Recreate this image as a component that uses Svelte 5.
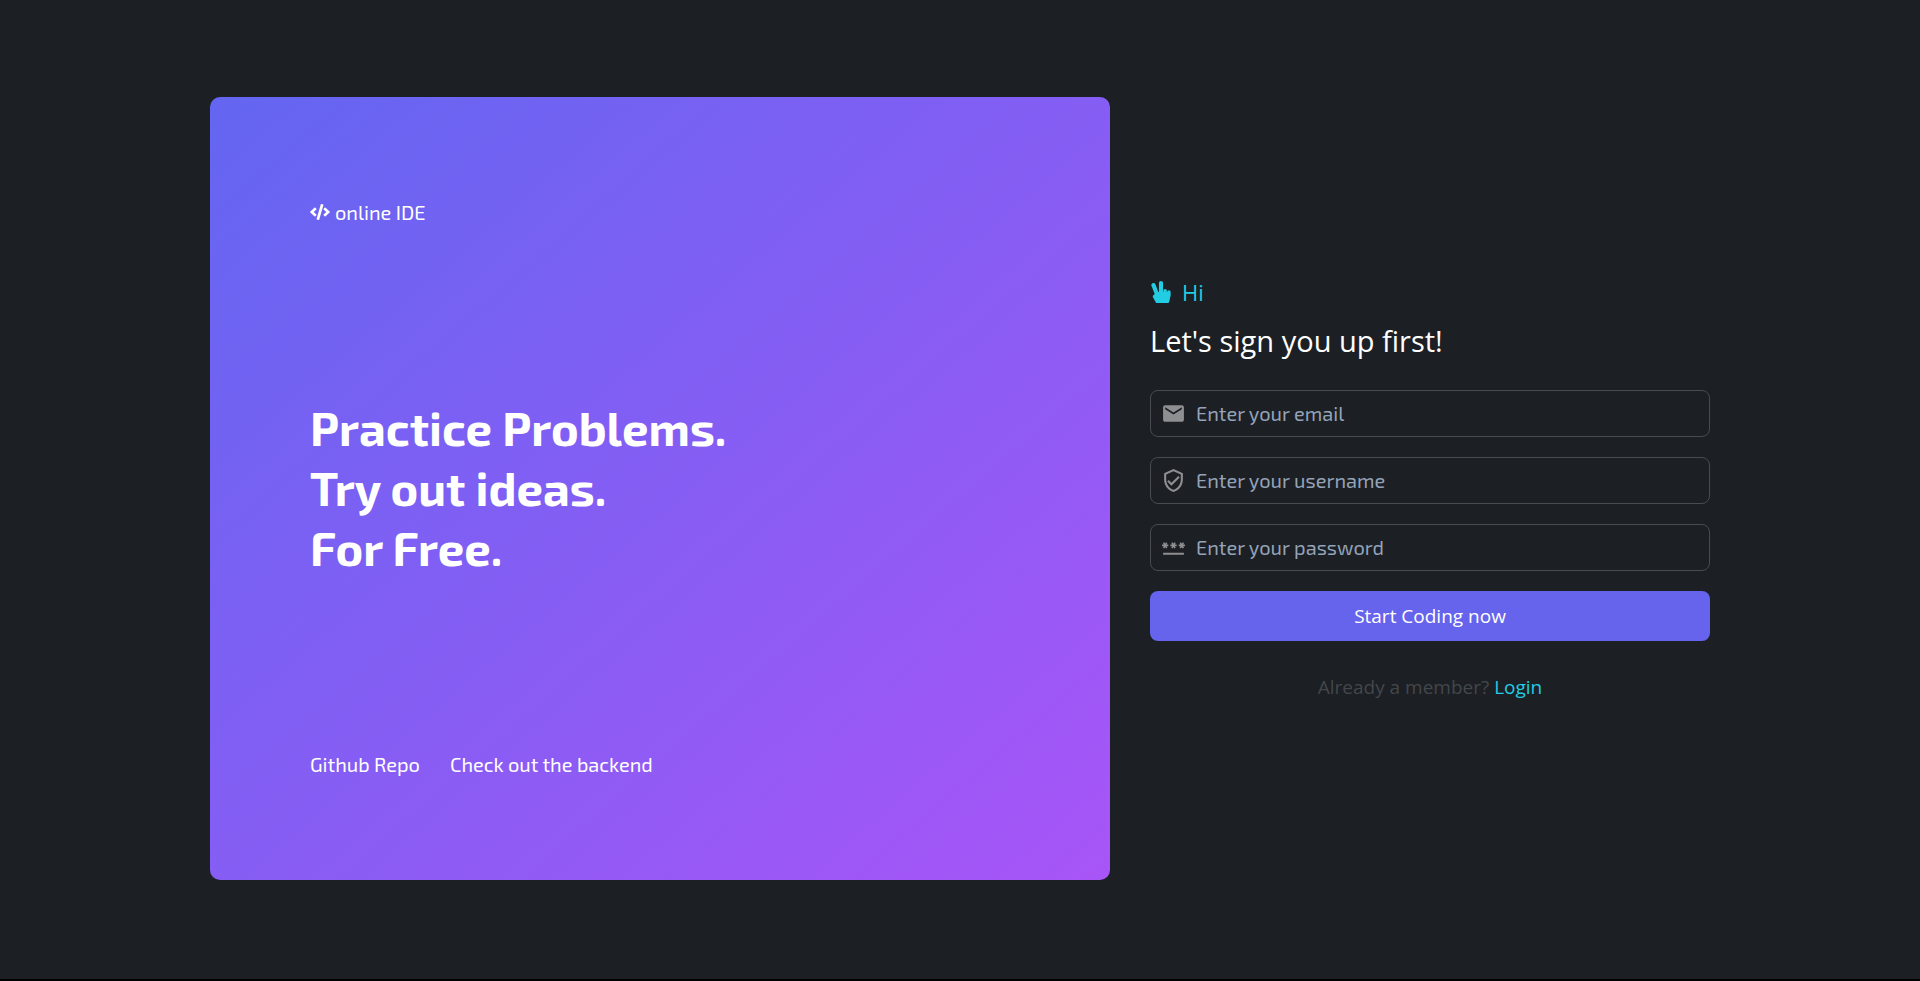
<script>
  const slogans = ['Practice Problems.', 'Try out ideas.', 'For Free.'];

  const icons = {
    email:
      'M20 4H4c-1.1 0-1.99.9-1.99 2L2 18c0 1.1.9 2 2 2h16c1.1 0 2-.9 2-2V6c0-1.1-.9-2-2-2zm0 4l-8 5-8-5V6l8 5 8-5v2z',
    shield:
      'M12 1L3 5v6c0 5.55 3.84 10.74 9 12 5.16-1.26 9-6.45 9-12V5l-9-4zm7 10c0 4.52-2.98 8.69-7 9.93-4.02-1.24-7-5.41-7-9.93V6.3l7-3.11 7 3.11V11zm-11.59.59L6 13l4 4 8-8-1.41-1.42L10 14.17z',
    password:
      'M2 17h20v2H2v-2zm1.15-4.05L4 11.47l.85 1.48 1.3-.75-.85-1.48H7v-1.5H5.3l.85-1.47L4.85 7 4 8.47 3.15 7l-1.3.75.85 1.47H1v1.5h1.7l-.85 1.48 1.3.75zm6.7-.75l1.3.75.85-1.48.85 1.48 1.3-.75-.85-1.48H15v-1.5h-1.7l.85-1.47-1.3-.75L12 8.47 11.15 7l-1.3.75.85 1.47H9v1.5h1.7l-.85 1.48zM23 9.22h-1.7l.85-1.47-1.3-.75L20 8.47 19.15 7l-1.3.75.85 1.47H17v1.5h1.7l-.85 1.48 1.3.75.85-1.48.85 1.48 1.3-.75-.85-1.48H23v-1.5z',
  };

  const fields = [
    { id: 'email', type: 'email', icon: icons.email, hint: 'Enter your email' },
    { id: 'username', type: 'text', icon: icons.shield, hint: 'Enter your username' },
    { id: 'password', type: 'password', icon: icons.password, hint: 'Enter your password' },
  ];
</script>

<main class="page">
  <div class="layout">
    <section class="hero">
      <div class="brand">
        <svg viewBox="0 0 640 512" width="20" height="16" aria-hidden="true">
          <path
            d="M278.9 511.5l-61-17.7c-6.4-1.8-10-8.5-8.2-14.9L346.2 8.7c1.8-6.4 8.5-10 14.9-8.2l61 17.7c6.4 1.8 10 8.5 8.2 14.9L293.8 503.3c-1.9 6.4-8.5 10.1-14.9 8.2zm-114-112.2l43.5-46.4c4.6-4.9 4.3-12.7-.8-17.2L117 256l90.6-79.7c5.1-4.5 5.5-12.3.8-17.2l-43.5-46.4c-4.5-4.8-12.1-5.1-17-.5L3.8 247.2c-5.1 4.7-5.1 12.8 0 17.5l144.1 135.1c4.9 4.6 12.5 4.4 17-.5zm327.2.6l144.1-135.1c5.1-4.7 5.1-12.8 0-17.5L492.1 112.1c-4.8-4.5-12.4-4.3-17 .5L431.6 159c-4.6 4.9-4.3 12.7.8 17.2L523 256l-90.6 79.7c-5.1 4.5-5.5 12.3-.8 17.2l43.5 46.4c4.5 4.9 12.1 5.1 17 .6z"
          />
        </svg>
        <span>online IDE</span>
      </div>
      <h1>
        {#each slogans as line}
          <span>{line}</span>
        {/each}
      </h1>
      <nav>
        <a href="#repo">Github Repo</a>
        <a href="#backend">Check out the backend</a>
      </nav>
    </section>

    <section class="signup">
      <p class="greeting">
        <svg viewBox="0 0 448 512" width="22" height="22" aria-hidden="true">
          <path
            d="M408 216c-22.092 0-40 17.909-40 40h-8v-32c0-22.091-17.908-40-40-40s-40 17.909-40 40v32h-8V48c0-26.51-21.49-48-48-48s-48 21.49-48 48v208h-13.572L92.688 78.449C82.994 53.774 55.134 41.63 30.461 51.324 5.787 61.017-6.356 88.877 3.337 113.551l74.765 190.342-31.09 24.872c-15.381 12.306-19.515 33.978-9.741 51.081l64 112A39.998 39.998 0 0 0 136 512h240c18.562 0 34.686-12.77 38.937-30.838l32-136A39.973 39.973 0 0 0 448 336v-80c0-22.091-17.908-40-40-40z"
          />
        </svg>
        <span>Hi</span>
      </p>
      <h2>Let's sign you up first!</h2>
      <form onsubmit={(e) => e.preventDefault()}>
        {#each fields as field}
          <div class="field">
            <label for={field.id} aria-label={field.hint}>
              <svg viewBox="0 0 24 24" width="25" height="25" aria-hidden="true">
                <path d={field.icon} />
              </svg>
            </label>
            <input id={field.id} type={field.type} placeholder={field.hint} />
          </div>
        {/each}
        <button type="submit">Start Coding now</button>
      </form>
      <p class="member">Already a member? <a href="#login">Login</a></p>
    </section>
  </div>
</main>

<style>
  :global(body) {
    margin: 0;
    background: #000;
  }

  .page {
    --exo: 'Exo 2', 'Roboto', sans-serif;
    --ui: 'Segoe UI', 'Open Sans', sans-serif;
    box-sizing: border-box;
    display: flex;
    align-items: center;
    justify-content: center;
    min-height: calc(100vh - 2px);
    padding: 24px 24px 26px;
    background: #1c1f24;
    color: #fff;
    font-family: var(--ui);
    font-size: 20px;
  }

  .layout {
    display: grid;
    grid-template-columns: 900fr 560fr;
    gap: 40px;
    width: 100%;
    max-width: 1500px;
    min-height: calc(80vh - 2px);
  }

  .hero {
    box-sizing: border-box;
    display: flex;
    flex-direction: column;
    justify-content: space-between;
    padding: 100px;
    border-radius: 10px;
    background: linear-gradient(to bottom right, #6366f1, #a855f7);
    font-family: var(--exo);
    font-weight: 400;
    line-height: 32px;
  }

  .brand {
    display: flex;
    align-items: center;
    gap: 5px;
    line-height: 30px;
  }

  svg {
    display: block;
    flex: none;
    fill: currentColor;
  }

  h1 {
    margin: 0;
    font-size: 47px;
    font-weight: 700;
    line-height: 60px;
  }

  h1 span {
    display: block;
  }

  nav {
    display: flex;
    gap: 30px;
  }

  a {
    color: inherit;
    text-decoration: none;
  }

  .signup {
    display: flex;
    flex-direction: column;
    justify-content: center;
    padding-top: 2px;
  }

  .greeting {
    display: flex;
    align-items: center;
    gap: 10px;
    margin: 0 0 13px;
    color: #22cce2;
    font-size: 22px;
    line-height: 32px;
  }

  h2 {
    margin: 0 0 29px;
    font-size: 29px;
    font-weight: 400;
    line-height: 40px;
  }

  form {
    display: flex;
    flex-direction: column;
    gap: 20px;
  }

  .field {
    box-sizing: border-box;
    display: flex;
    align-items: center;
    gap: 10px;
    height: 47px;
    padding: 0 10px;
    border: 1px solid #484b50;
    border-radius: 8px;
    color: #8e8f91;
  }

  input {
    flex: 1;
    min-width: 0;
    padding: 0;
    border: 0;
    outline: 0;
    background: transparent;
    color: #fff;
    font: 400 20px var(--exo);
  }

  input::placeholder {
    color: #94a3b8;
    opacity: 1;
  }

  button {
    height: 50px;
    border: 0;
    border-radius: 8px;
    background: #6663ec;
    color: #fff;
    font: 400 19px var(--ui);
    cursor: pointer;
  }

  .member {
    margin: 30px 0 0;
    color: #43474b;
    font-size: 19px;
    line-height: 32px;
    text-align: center;
  }

  .member a {
    color: #22cce2;
  }
</style>
